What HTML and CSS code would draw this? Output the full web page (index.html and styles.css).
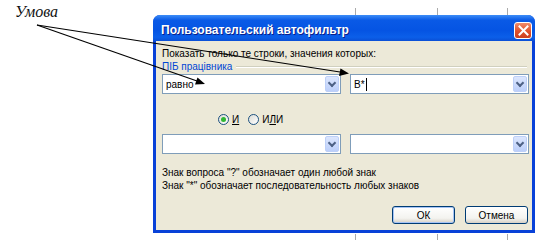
FILE: index.html
```html
<!DOCTYPE html>
<html lang="ru">
<head>
  <meta charset="UTF-8">
  <title>Пользовательский автофильтр</title>
  <link rel="stylesheet" href="styles.css">
</head>
<body>
  <div class="page">
    <div class="label">Умова</div>

    <div class="dialog">
      <div class="titlebar">
        <span class="title">Пользовательский автофильтр</span>
        <span class="close">
          <svg width="11" height="11" viewBox="0 0 11 11">
            <path d="M1.5 1.5 L9.5 9.5 M9.5 1.5 L1.5 9.5" stroke="#fff" stroke-width="2" stroke-linecap="square"/>
          </svg>
        </span>
      </div>

      <div class="content">
        <div class="hint">Показать только те строки, значения которых:</div>
        <div class="group">
          <span class="group-name">ПІБ працівника</span>
          <span class="group-line"></span>
        </div>

        <div class="row">
          <div class="combo"><span class="value">равно</span><span class="drop"></span></div>
          <div class="combo"><span class="value">В*<i class="caret"></i></span><span class="drop"></span></div>
        </div>

        <div class="radios">
          <span class="radio checked"></span><span class="radio-text"><u>И</u></span>
          <span class="radio"></span><span class="radio-text">И<u>Л</u>И</span>
        </div>

        <div class="row second">
          <div class="combo"><span class="value"></span><span class="drop"></span></div>
          <div class="combo"><span class="value"></span><span class="drop"></span></div>
        </div>

        <div class="help">
          <div>Знак вопроса "?" обозначает один любой знак</div>
          <div>Знак "*" обозначает последовательность любых знаков</div>
        </div>

        <div class="buttons">
          <button class="btn default">ОК</button>
          <button class="btn">Отмена</button>
        </div>
      </div>
    </div>

    <!-- стрелки от подписи -->
    <svg class="arrows" width="542" height="244" viewBox="0 0 542 244">
      <g stroke="#aaa" stroke-width="1">
        <line x1="355.5" y1="8" x2="355.5" y2="15"/>
        <line x1="437.5" y1="8" x2="437.5" y2="15"/>
        <line x1="507.5" y1="8" x2="507.5" y2="15"/>
        <line x1="355.5" y1="234" x2="355.5" y2="240"/>
        <line x1="437.5" y1="234" x2="437.5" y2="240"/>
        <line x1="507.5" y1="234" x2="507.5" y2="240"/>
      </g>
      <g stroke="#000" stroke-width="1.2" fill="none">
        <line x1="37" y1="25" x2="340" y2="72"/>
        <line x1="37" y1="25" x2="197" y2="81"/>
      </g>
      <g fill="#000">
        <polygon points="349,73.5 339,76 340.5,68.5"/>
        <polygon points="205,84 195,84.5 197.5,77.5"/>
      </g>
    </svg>
  </div>
</body>
</html>
```

FILE: styles.css
```css
body {
  margin: 0;
  background: #fff;
  font-family: "Liberation Sans", Arial, sans-serif;
}

.page {
  position: relative;
  width: 542px;
  height: 244px;
  display: flex;
  align-items: flex-start;
}

.label {
  width: 138px;
  padding: 3px 0 0 15px;
  font-family: "Liberation Serif", "Times New Roman", serif;
  font-style: italic;
  font-size: 16px;
  color: #111;
}

.dialog {
  margin-top: 15px;
  width: 382px;
  height: 218px;
  display: flex;
  flex-direction: column;
  background: #0841d8;
  border-radius: 7px 7px 0 0;
  box-sizing: border-box;
  padding: 0 3px 3px 3px;
}

.titlebar {
  height: 26px;
  display: flex;
  align-items: center;
  justify-content: space-between;
  margin: 0 -3px;
  padding: 0 3px 0 8px;
  border-radius: 7px 7px 0 0;
  background: linear-gradient(#3d8df7 0%, #0a5ae6 20%, #0554e3 60%, #0b5fe9 85%, #0a4fd6 100%);
}

.title {
  color: #fff;
  font-weight: bold;
  font-size: 12px;
  text-shadow: 1px 1px 0 #0a1f8a;
  margin-top: 3px;
}

.close {
  width: 16px;
  height: 15px;
  margin-top: 4px;
  display: flex;
  align-items: center;
  justify-content: center;
  border: 1px solid #fff;
  border-radius: 3px;
  background: linear-gradient(#f08c6c, #e0502b 55%, #cc4020);
}

.content {
  flex: 1;
  background: #ece9d8;
  padding: 0 3px 0 6px;
  font-size: 10px;
  color: #000;
}

.hint {
  margin-top: 6px;
  line-height: 13px;
}

.group {
  display: flex;
  align-items: center;
  height: 13px;
  line-height: 13px;
}

.group-name {
  color: #0046d5;
  padding-right: 4px;
}

.group-line {
  flex: 1;
  height: 1px;
  margin-right: 2px;
  background: #d0d0bf;
  border-bottom: 1px solid #fff;
}

.row {
  display: flex;
  gap: 9px;
  margin-top: 1px;
}

.row.second {
  margin-top: 8px;
}

.combo {
  width: 179px;
  height: 20px;
  box-sizing: border-box;
  border: 1px solid #7f9db9;
  background: #fff;
  display: flex;
  align-items: center;
  padding: 1px;
}

.value {
  flex: 1;
  padding-left: 2px;
  display: flex;
  align-items: center;
}

.caret {
  display: inline-block;
  width: 1px;
  height: 13px;
  background: #000;
  margin-left: 1px;
}

.drop {
  width: 14px;
  height: 16px;
  box-sizing: border-box;
  border: 1px solid #bdd0f8;
  border-radius: 2px;
  background: linear-gradient(#dce6fd, #bccffa);
  position: relative;
}

.drop::after {
  content: "";
  position: absolute;
  left: 3px;
  top: 3px;
  width: 4px;
  height: 4px;
  border-right: 2px solid #4d6185;
  border-bottom: 2px solid #4d6185;
  transform: rotate(45deg);
}

.radios {
  display: flex;
  align-items: center;
  height: 14px;
  margin: 18px 0 0 56px;
}

.radio {
  width: 11px;
  height: 11px;
  box-sizing: border-box;
  border: 1px solid #1c5180;
  border-radius: 50%;
  background: linear-gradient(135deg, #dcdcd6, #fff);
  position: relative;
}

.radio.checked::after {
  content: "";
  position: absolute;
  left: 2px;
  top: 2px;
  width: 5px;
  height: 5px;
  border-radius: 50%;
  background: #2fb733;
}

.radio-text {
  margin: 0 9px 0 3px;
}

.help {
  margin-top: 12px;
  line-height: 13px;
}

.buttons {
  display: flex;
  justify-content: flex-end;
  gap: 10px;
  margin-top: 14px;
  padding-right: 1px;
}

.btn {
  width: 63px;
  height: 18px;
  padding: 0;
  font-family: "Liberation Sans", Arial, sans-serif;
  font-size: 10px;
  color: #000;
  border: 1px solid #003c74;
  border-radius: 3px;
  background: linear-gradient(#fff, #f3f3ef 70%, #d6d0c5);
}

.btn.default {
  box-shadow: inset 0 0 0 1px #a6c4f5;
}

.arrows {
  position: absolute;
  left: 0;
  top: 0;
  pointer-events: none;
}
```
